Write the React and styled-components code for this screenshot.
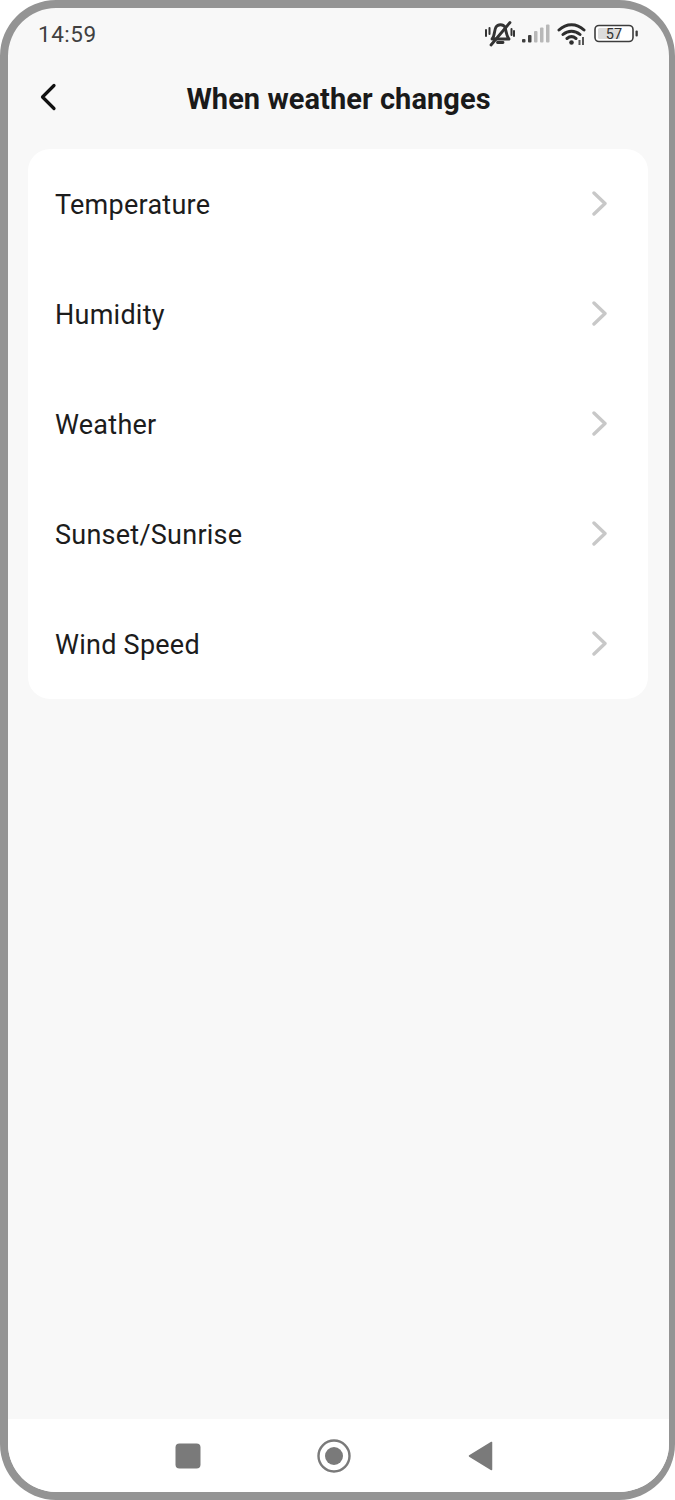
import React from 'react';
import styled, { createGlobalStyle } from 'styled-components';

const Global = createGlobalStyle`
html,body{margin:0;padding:0;background:#fff;}
#root{width:675px;height:1500px;}
`;

const Phone = styled.div`
width:675px;
height:1500px;
box-sizing:border-box;
border:solid #949494;
border-width:8px 6px 8px 8px;
border-radius:56px;
background:#f8f8f8;
overflow:hidden;
display:flex;
flex-direction:column;
font-family:Roboto,"Liberation Sans",sans-serif;
color:#1a1a1a;
`;
const StatusBar = styled.div`
height:52px;
flex:none;
display:flex;
align-items:center;
justify-content:space-between;
padding:0 31px 0 30px;
`;
const Clock = styled.div`
font-size:22.5px;
color:#404040;
letter-spacing:.5px;
`;
const StatusIcons = styled.div`
display:flex;
align-items:center;
gap:7px;
`;
const Header = styled.div`
height:78px;
flex:none;
position:relative;
display:flex;
align-items:center;
justify-content:center;
`;
const BackIcon = styled.svg`
position:absolute;
left:31px;
top:23px;
`;
const Title = styled.h1`
margin:0;
font-size:29px;
font-weight:700;
letter-spacing:.06px;
color:#1a1a1a;
`;
const Card = styled.div`
margin:11px 21px 0 20px;
height:550px;
background:#fff;
border-radius:22px;
flex:none;
`;
const Row = styled.div`
height:110px;
box-sizing:border-box;
display:flex;
align-items:center;
justify-content:space-between;
padding:0 39px 0 28px;
`;
const Label = styled.span`
font-size:27px;
letter-spacing:.25px;
color:#1c1c1c;
position:relative;
top:1px;
left:-1px;
`;
const Spacer = styled.div`
flex:1;
`;
const NavBar = styled.div`
height:73px;
flex:none;
box-sizing:border-box;
background:#fff;
display:flex;
align-items:center;
justify-content:center;
gap:116px;
padding:1px 9px 0 0;
`;

const Chevron = () => (
  <svg width="18" height="26" viewBox="0 0 18 26">
    <path d="M3 2 L14 12.500 L3 23" fill="none" stroke="#c8c8c8" strokeWidth="3.4" strokeLinecap="round" strokeLinejoin="round" />
  </svg>
);

const items = ['Temperature', 'Humidity', 'Weather', 'Sunset/Sunrise', 'Wind Speed'];

export default function App() {
  return (
    <Phone>
      <Global />
      <StatusBar>
        <Clock>14:59</Clock>
        <StatusIcons>
          <svg width="30" height="26" viewBox="0 0 30 26">
            <path d="M7 18 C10 15 9 9 11 6 C13 3 18 3 20 6 C21 9 21 14 24 18 Z M12.500 21.500 H18" fill="none" stroke="#333" strokeWidth="2.900" strokeLinejoin="round" strokeLinecap="round" />
            <path d="M6 24 L25 1.500" stroke="#333" strokeWidth="2.800" strokeLinecap="round" />
            <path d="M1 9 V15 M4.500 7 V13 M26.500 8 V14 M29 10 V15" stroke="#333" strokeWidth="2" strokeLinecap="round" />
          </svg>
          <svg width="28" height="20" viewBox="0 0 28 20">
            <rect x="0" y="15" width="3.500" height="3.500" rx="1" fill="#404040" />
            <rect x="6" y="11" width="3.500" height="7.500" rx="1" fill="#404040" />
            <rect x="12" y="7" width="3.500" height="11.500" rx="1" fill="#b8b8b8" />
            <rect x="18" y="3.500" width="3.500" height="15" rx="1" fill="#b8b8b8" />
            <rect x="24" y="0.500" width="3.500" height="18" rx="1" fill="#b8b8b8" />
          </svg>
          <svg width="30" height="24" viewBox="0 0 30 24">
            <path d="M2 8 C9.500 1 19.500 1 27 8 M6 12.500 C11 8 18 8 23 12.500 M10 16.500 C13 14 16 14 19 16.500" fill="none" stroke="#2e2e2e" strokeWidth="3" strokeLinecap="round" />
            <circle cx="14.500" cy="20.500" r="2.300" fill="#2e2e2e" />
            <path d="M22.500 23 V18 M26 23 V15" stroke="#555" strokeWidth="2" />
          </svg>
          <svg width="44" height="20" viewBox="0 0 44 20">
            <rect x="1" y="1.500" width="38" height="16" rx="4" fill="#fff" stroke="#3c3c3c" strokeWidth="1.600" />
            <rect x="4" y="4" width="22" height="11" rx="1.500" fill="#dcdcdc" />
            <text x="20" y="15" textAnchor="middle" fontSize="14.500" fontFamily="Roboto,sans-serif" fill="#333">57</text>
            <rect x="41.500" y="6.500" width="2.300" height="6" rx="1" fill="#3c3c3c" />
          </svg>
        </StatusIcons>
      </StatusBar>
      <Header>
        <BackIcon width="18" height="28" viewBox="0 0 18 28">
          <path d="M15 2.500 L3.500 14 L15 25.500" fill="none" stroke="#111" strokeWidth="3.200" strokeLinecap="round" strokeLinejoin="round" />
        </BackIcon>
        <Title>When weather changes</Title>
      </Header>
      <Card>
        {items.map(t => (
          <Row key={t}>
            <Label>{t}</Label>
            <Chevron />
          </Row>
        ))}
      </Card>
      <Spacer />
      <NavBar>
        <svg width="26" height="26" viewBox="0 0 26 26">
          <rect x="0.500" y="0.500" width="25" height="25" rx="4" fill="#7a7a7a" />
        </svg>
        <svg width="34" height="34" viewBox="0 0 34 34">
          <circle cx="17" cy="17" r="15.500" fill="none" stroke="#7a7a7a" strokeWidth="2.400" />
          <circle cx="17" cy="17" r="9" fill="#7a7a7a" />
        </svg>
        <svg width="26" height="30" viewBox="0 0 26 30">
          <path d="M24.500 1.500 V28.500 L2.500 15 Z" fill="#7a7a7a" stroke="#7a7a7a" strokeWidth="1.500" strokeLinejoin="round" />
        </svg>
      </NavBar>
    </Phone>
  );
}
